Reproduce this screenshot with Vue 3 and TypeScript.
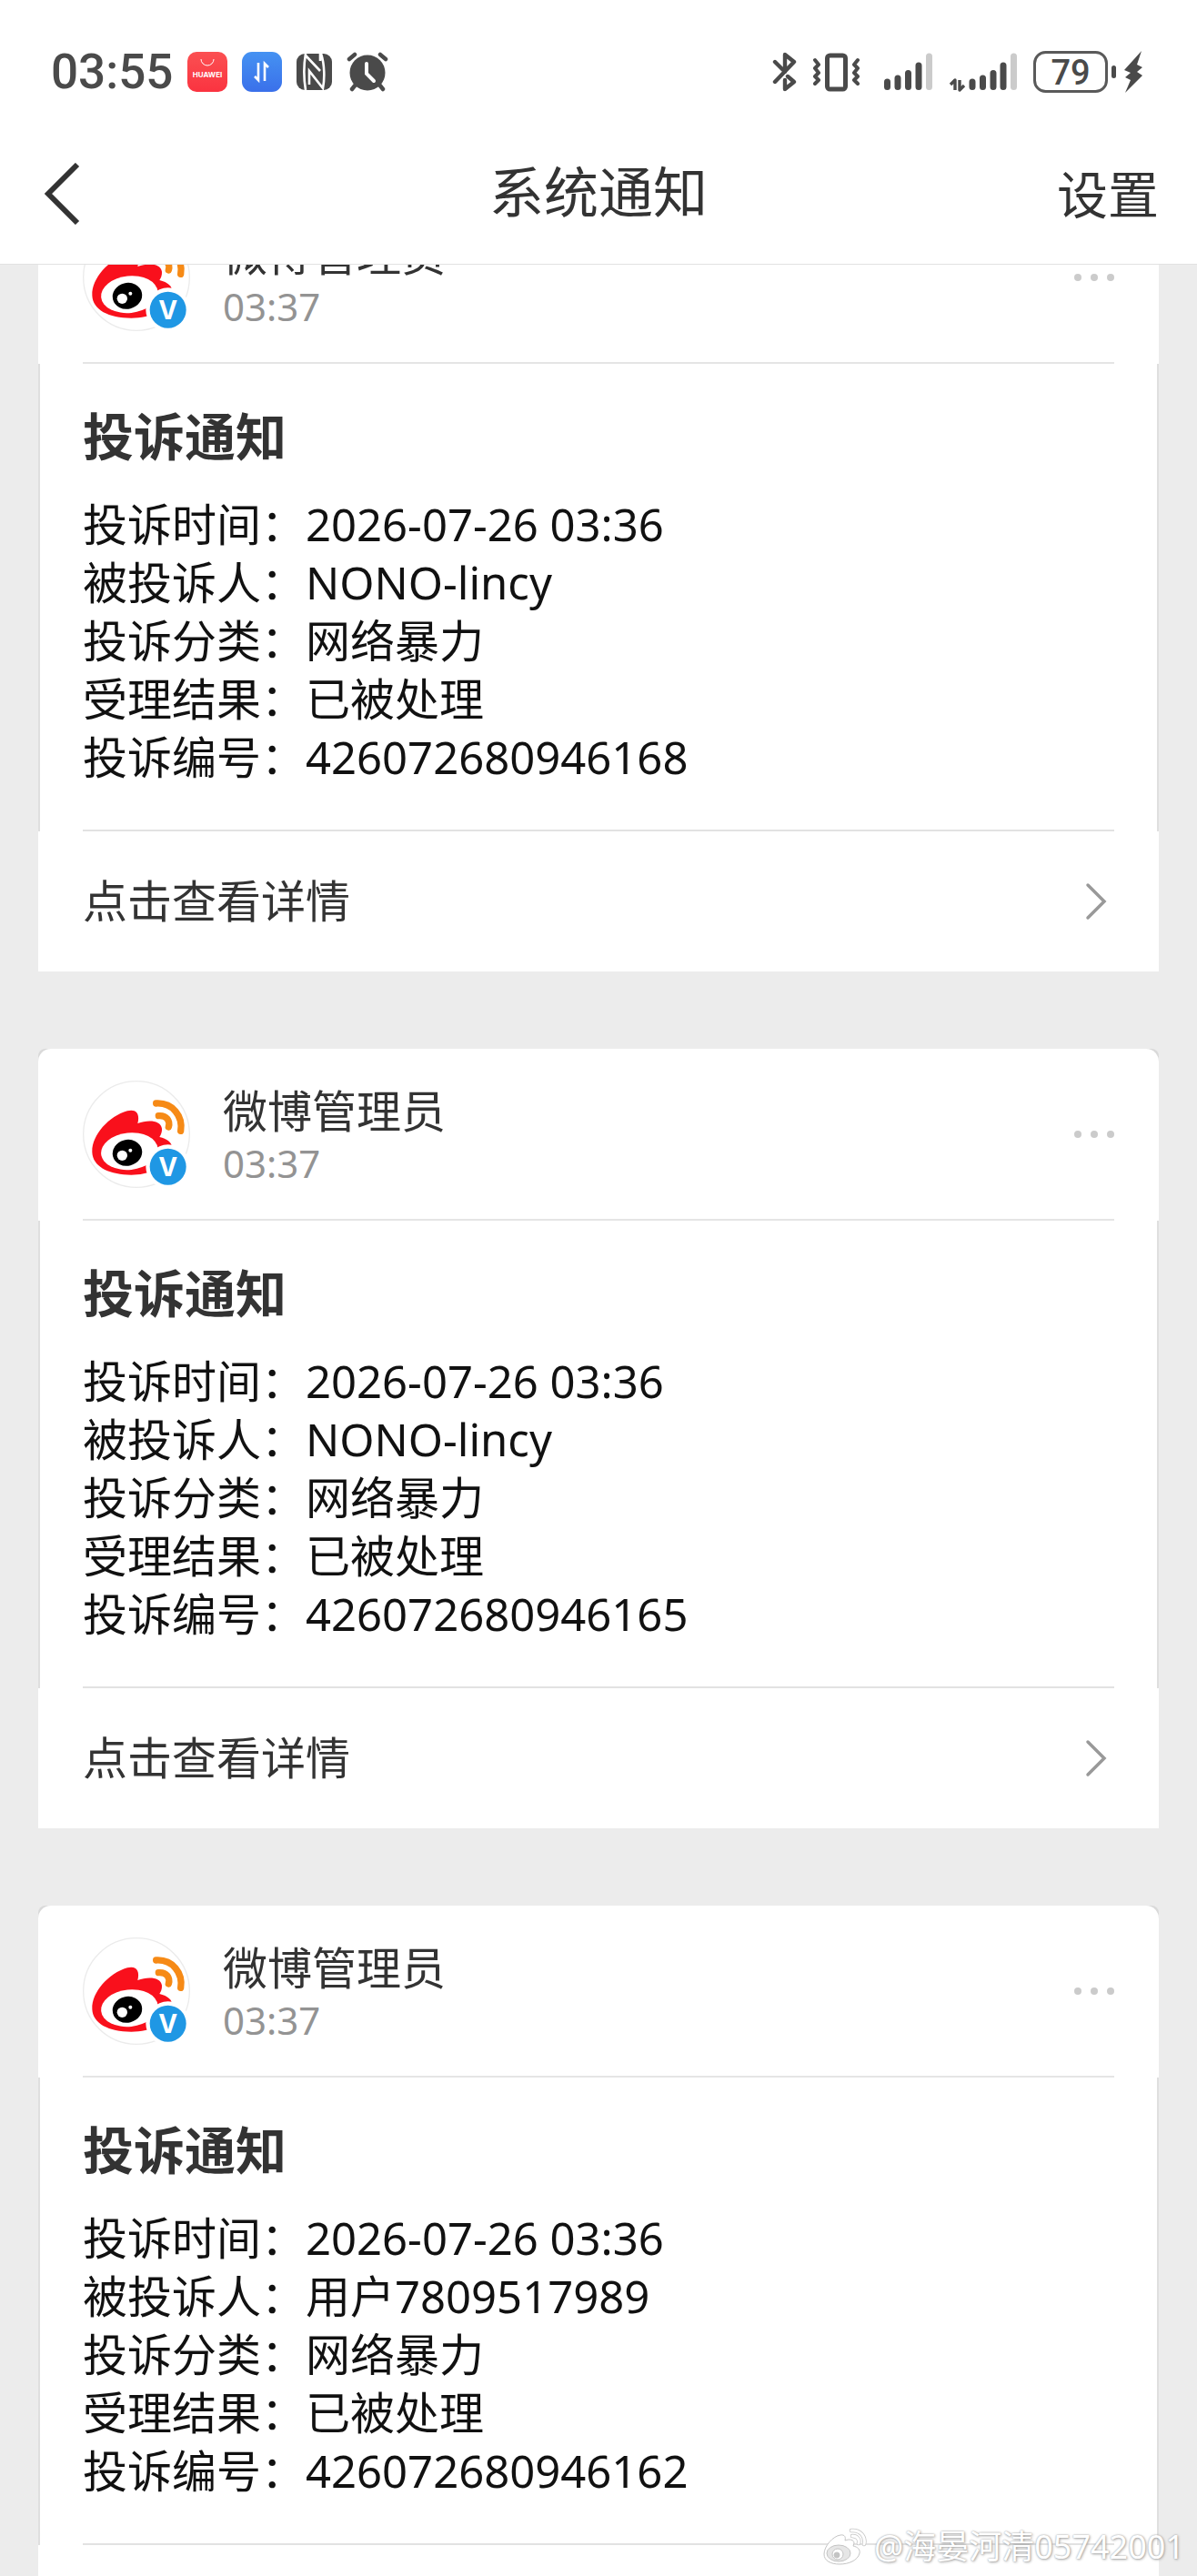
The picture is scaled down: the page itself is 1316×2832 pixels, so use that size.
<script setup lang="ts">
interface Field {
  label: string
  value: string
}

interface Notice {
  id: string
  sender: string
  time: string
  title: string
  fields: Field[]
}

function complaint(target: string, id: string): Notice {
  return {
    id,
    sender: '微博管理员',
    time: '03:37',
    title: '投诉通知',
    fields: [
      { label: '投诉时间', value: '2026-07-26 03:36' },
      { label: '被投诉人', value: target },
      { label: '投诉分类', value: '网络暴力' },
      { label: '受理结果', value: '已被处理' },
      { label: '投诉编号', value: id },
    ],
  }
}

const notices: Notice[] = [
  complaint('NONO-lincy', '426072680946168'),
  complaint('NONO-lincy', '426072680946165'),
  complaint('用户7809517989', '426072680946162'),
]
</script>

<template>
  <div class="screen">
    <header class="top">
      <div class="status">
        <div class="status-group">
          <span class="clock">03:55</span>
          <svg width="44" height="44" viewBox="0 0 44 44">
            <defs>
              <linearGradient id="red" x1="0" y1="0" x2="0" y2="1">
                <stop offset="0" stop-color="#fb5052" />
                <stop offset="1" stop-color="#fa3340" />
              </linearGradient>
            </defs>
            <rect width="44" height="44" rx="10" fill="url(#red)" />
            <path d="M15 8a7 7 0 0 0 14 0" fill="none" stroke="#fff" stroke-width="1" />
            <text x="22" y="28" class="brand">HUAWEI</text>
          </svg>
          <svg width="44" height="44" viewBox="0 0 44 44">
            <defs>
              <linearGradient id="blue" x1="0" y1="0" x2="0" y2="1">
                <stop offset="0" stop-color="#4592f2" />
                <stop offset="1" stop-color="#3a70ea" />
              </linearGradient>
            </defs>
            <rect width="44" height="44" rx="11" fill="url(#blue)" />
            <path d="M18 12v19l-4-4M25 32V13l4 4" fill="none" stroke="#fff" stroke-width="2.6" />
          </svg>
          <svg width="39" height="40" viewBox="0 0 39 40">
            <rect width="39" height="40" rx="9" fill="#4a4a4a" />
            <path d="M10 0C8 12 8 28 10 40M10 2L26 19M26 8V0M27 0C31 12 31 28 29 38L14 19V34" fill="none" stroke="#fff" stroke-width="2.6" />
          </svg>
          <svg width="46" height="44" viewBox="0 0 46 44">
            <g fill="none" stroke="#4a4a4a" stroke-width="4.5" stroke-linecap="round">
              <path d="M3 8l6-5M43 8l-6-5M10 36l-4 5M36 36l4 5" />
            </g>
            <circle cx="23" cy="23" r="19.5" fill="#4a4a4a" />
            <path d="M22 13v11l8 8" fill="none" stroke="#fff" stroke-width="4" stroke-linecap="round" />
          </svg>
        </div>
        <div class="status-group right">
          <svg width="27" height="44" viewBox="0 0 27 44">
            <path d="M3 11l11 11V3l10 8L3 33M14 31v10l10-8-7-6" fill="none" stroke="#4a4a4a" stroke-width="4.4" stroke-linecap="round" stroke-linejoin="round" />
          </svg>
          <svg width="60" height="44" viewBox="0 0 60 44">
            <rect x="15.5" y="4" width="20" height="37" rx="3" fill="none" stroke="#4a4a4a" stroke-width="5" />
            <path d="M2 9l4 5-4 4 4 5-4 4 4 4-4 4M49 9l-4 5 4 4-4 5 4 4-4 4 4 4" fill="none" stroke="#4a4a4a" stroke-width="4" stroke-linejoin="round" stroke-linecap="round" />
          </svg>
          <svg width="53" height="44" viewBox="0 0 53 44">
            <g stroke-width="7" stroke-linecap="round" stroke="#4a4a4a">
              <path d="M3.5 33v5.5M15 29v9.5M26.5 23.5v15M38 15v23.5" />
              <path d="M49.5 5v33.5" stroke="#cbcbcb" />
            </g>
          </svg>
          <svg width="75" height="44" viewBox="0 0 75 44">
            <path d="M7 42V31L2 36M12 31v11l5-5" fill="none" stroke="#4a4a4a" stroke-width="3.4" stroke-linejoin="round" />
            <g stroke-width="7" stroke-linecap="round" stroke="#4a4a4a">
              <path d="M26 33v5.5M37.5 29v9.5M49 23.5v15M60 15v23.5" />
              <path d="M71.5 5v33.5" stroke="#cbcbcb" />
            </g>
          </svg>
          <svg width="120" height="46" viewBox="0 0 120 46">
            <rect x="1.5" y="1.5" width="79" height="43" rx="12" fill="none" stroke="#5a5a5a" stroke-width="3" />
            <rect x="86" y="16" width="5" height="14" rx="2.5" fill="#4a4a4a" />
            <text x="41" y="37" class="level">79</text>
            <path d="M119 0L100 21l7 3-6 5 6 3-6 14 19-19-6-4 6-5-6-3z" fill="#4a4a4a" />
          </svg>
        </div>
      </div>
      <nav class="nav">
        <button class="back" type="button" aria-label="返回">
          <svg width="46" height="68" viewBox="0 0 46 68">
            <path d="M43 2L11 34l32 32" fill="none" stroke="#333" stroke-width="6" />
          </svg>
        </button>
        <h1 class="nav-title">系统通知</h1>
        <a class="settings" href="#">设置</a>
      </nav>
    </header>

    <main class="list">
      <article v-for="n in notices" :key="n.id" class="card">
        <div class="edge">
          <div class="card-head">
            <svg class="avatar" viewBox="65 54 354 354" role="img" aria-label="微博">
              <circle cx="242" cy="231" r="175" fill="#fff" stroke="#ebebeb" stroke-width="4" />
              <path d="M96 290C94 235 150 172 212 154C242 146 254 165 246 195C280 182 322 184 326 212C327 224 322 234 318 240C345 246 362 262 358 275C350 340 290 364 225 365C150 364 98 338 96 290Z" fill="#f9101c" />
              <ellipse cx="219" cy="287" rx="94" ry="61" fill="#fff" transform="rotate(-6 219 287)" />
              <ellipse cx="212" cy="292" rx="49" ry="43" transform="rotate(-14 212 292)" />
              <circle cx="195" cy="301" r="17" fill="#fff" />
              <circle cx="222" cy="284" r="6" fill="#fff" />
              <path d="M307 129C362 126 396 172 388 220M315 170C342 168 354 186 348 207" fill="none" stroke="#f68a16" stroke-width="22" stroke-linecap="round" />
              <circle cx="346" cy="338" r="73" fill="#fff" />
              <circle cx="346" cy="338" r="60" fill="#1f97e4" />
              <text x="346" y="368" class="vip">V</text>
            </svg>
            <div class="who">
              <span class="sender">{{ n.sender }}</span>
              <time class="time">{{ n.time }}</time>
            </div>
            <button class="more" type="button" aria-label="更多">
              <i></i><i></i><i></i>
            </button>
          </div>
        </div>
        <div class="card-body">
          <div class="body-inner">
            <h2 class="title">{{ n.title }}</h2>
            <p v-for="f in n.fields" :key="f.label" class="field">{{ f.label }}：{{ f.value }}</p>
          </div>
        </div>
        <a class="card-foot" href="#">
          <span class="foot-label">点击查看详情</span>
          <svg width="24" height="42" viewBox="0 0 24 42">
            <path d="M3 3l18 18L3 39" fill="none" stroke="#999" stroke-width="3.5" stroke-linecap="round" />
          </svg>
        </a>
      </article>
    </main>

    <div class="watermark">
      <svg width="48" height="42" viewBox="0 0 48 42">
        <g fill="#fff" stroke="#c4c4c4" stroke-width="1">
          <path d="M1 29C1 20 11 9 19 8C24 7 25 11 24 14C29 12 34 13 34 17L33 20C38 21 41 24 40 28C38 36 28 40 18 40C8 40 1 36 1 29Z" />
          <ellipse cx="17" cy="28" rx="13" ry="9" fill="#e6e6e6" />
          <circle cx="16" cy="29" r="6" />
          <circle cx="15" cy="30" r="3" fill="#c4c4c4" />
        </g>
        <path d="M31 3C41 2 47 10 45 18M32 9C38 9 40 13 39 17" fill="none" stroke="#c4c4c4" stroke-width="4.5" stroke-linecap="round" />
        <path d="M31 3C41 2 47 10 45 18M32 9C38 9 40 13 39 17" fill="none" stroke="#fff" stroke-width="3" stroke-linecap="round" />
      </svg>
      <span>@海晏河清05742001</span>
    </div>
  </div>
</template>

<style>
body {
  margin: 0;
  background: #ececec;
}
</style>

<style scoped>
.screen {
  position: relative;
  display: flex;
  flex-direction: column;
  height: 100vh;
  overflow: hidden;
  background: #ececec;
  color: #333;
  font-family: "Noto Sans", "Noto Sans CJK SC", sans-serif;
}
button {
  padding: 0;
  border: 0;
  background: none;
  cursor: pointer;
}
a {
  color: inherit;
  text-decoration: none;
}
svg {
  display: block;
  flex: none;
}
h1,
h2,
p {
  margin: 0;
  font-weight: 400;
}
.top {
  flex: none;
  z-index: 1;
  background: #fff;
  border-bottom: 1px solid #e2e2e2;
}
.status {
  display: flex;
  align-items: center;
  justify-content: space-between;
  height: 114px;
  padding: 22px 60px 0 56px;
}
.status-group {
  display: flex;
  align-items: center;
  gap: 16px;
}
.status-group.right {
  gap: 18px;
}
.clock {
  color: #4a4a4a;
  font: 500 53px/64px Roboto, sans-serif;
}
.brand {
  fill: #fff;
  font: 700 8px Inter, sans-serif;
  text-anchor: middle;
}
.level {
  fill: #4a4a4a;
  font: 500 38px Roboto, sans-serif;
  text-anchor: middle;
}
.nav {
  display: grid;
  grid-template-columns: 1fr auto 1fr;
  align-items: center;
  height: 154px;
  padding: 0 42px;
}
.back {
  justify-self: start;
}
.nav-title {
  padding-bottom: 4px;
  font-size: 60px;
  line-height: 80px;
}
.settings {
  justify-self: end;
  font-size: 56px;
  line-height: 80px;
}
.list {
  flex: 1;
  min-height: 0;
  margin-top: -80px;
  overflow-y: auto;
  scrollbar-width: none;
  padding: 0 42px;
}
.card {
  margin-bottom: 85px;
}
.edge {
  border-radius: 8px 8px 0 0;
  background: #d9d9d9;
}
.card-head {
  display: flex;
  align-items: center;
  height: 187px;
  padding: 0 49px 2px;
  border-radius: 14px 14px 0 0;
  background: linear-gradient(#e5e5e5, #e5e5e5) center bottom / calc(100% - 98px) 2px no-repeat #fff;
}
.avatar {
  width: 118px;
  height: 118px;
}
.vip {
  fill: #fff;
  font: 700 84px Inter, sans-serif;
  text-anchor: middle;
}
.who {
  display: flex;
  flex: 1;
  flex-direction: column;
  margin-left: 36px;
  padding-top: 4px;
}
.sender {
  font-size: 49px;
  line-height: 60px;
}
.time {
  color: #939393;
  font-size: 42px;
  line-height: 56px;
}
.more {
  display: flex;
  gap: 10px;
}
.more i {
  width: 8px;
  height: 8px;
  border-radius: 50%;
  background: #cbcbcb;
}
.card-body {
  padding: 0 47px;
  border: solid #dfdfdf;
  border-width: 0 2px;
  background: #fff;
}
.body-inner {
  padding: 43px 0 48px;
  border-bottom: 2px solid #e2e2e2;
}
.title {
  margin-bottom: 29px;
  font-size: 56px;
  font-weight: 700;
  line-height: 72px;
}
.field {
  color: #111;
  font-size: 49px;
  line-height: 64px;
}
.card-foot {
  display: flex;
  align-items: center;
  justify-content: space-between;
  height: 154px;
  padding: 0 57px 0 49px;
  background: #fff;
  font-size: 49px;
  line-height: 56px;
}
.foot-label {
  padding-bottom: 2px;
}
.watermark {
  position: absolute;
  right: 14px;
  bottom: 8px;
  z-index: 2;
  display: flex;
  align-items: center;
  gap: 8px;
  color: #fff;
  font-size: 36px;
  line-height: 48px;
  text-shadow: 0 0 2px #999, 1px 1px 3px #aaa;
}
</style>
